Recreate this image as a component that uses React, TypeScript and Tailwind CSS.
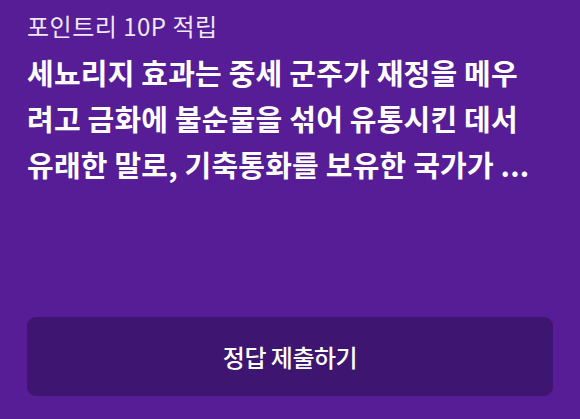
export default function App() {
  return (
    <div
      className="flex h-[419px] w-[580px] flex-col bg-[#561d97] px-[27px] pt-[10px] pb-[23px] text-white"
      style={{ fontFamily: '"Noto Sans CJK KR", "Noto Sans", sans-serif' }}
    >
      {/* Reward label */}
      <p className="text-[24px] leading-[32px] tracking-[0.5px] text-[#efe8f7]">포인트리 10P 적립</p>

      {/* Question */}
      <p className="mt-[7px] text-[29px] font-bold leading-[46px] tracking-[0.2px]">
        <span className="block whitespace-nowrap">세뇨리지 효과는 중세 군주가 재정을 메우</span>
        <span className="block whitespace-nowrap">려고 금화에 불순물을 섞어 유통시킨 데서</span>
        <span className="block whitespace-nowrap">유래한 말로, 기축통화를 보유한 국가가 ...</span>
      </p>

      <div className="flex-1" />

      <button className="flex h-[79px] w-full items-center justify-center rounded-[9px] bg-[#3e1570] text-[24px] font-medium tracking-[-0.5px] text-white">
        정답 제출하기
      </button>
    </div>
  );
}
